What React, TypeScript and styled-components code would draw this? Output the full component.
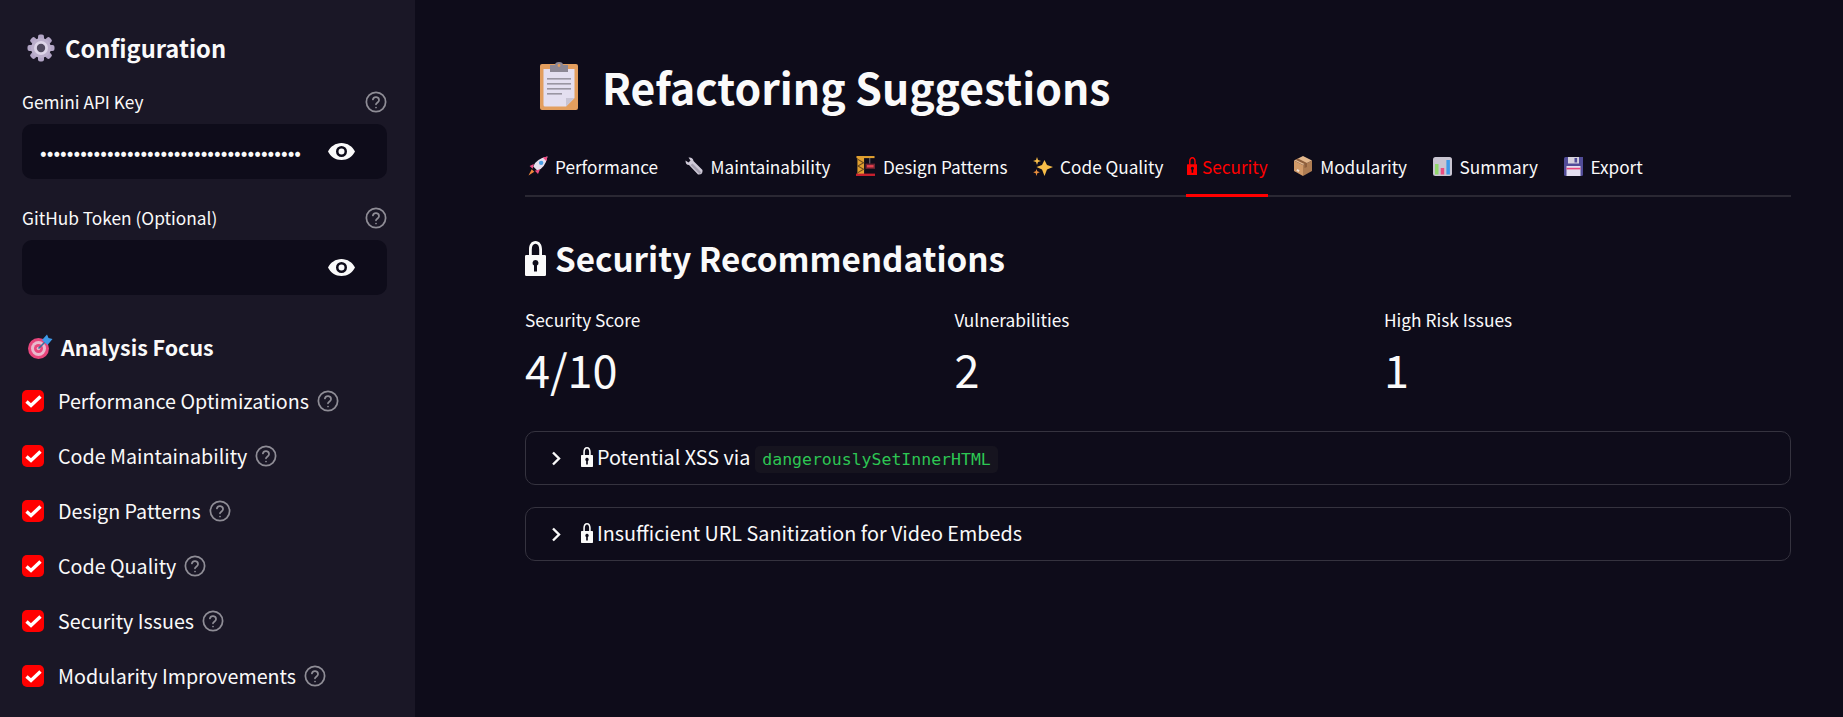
import React from "react";
import styled, { createGlobalStyle } from "styled-components";

const SANS = '"Noto Sans CJK JP", "Noto Sans", sans-serif';
const MONO = '"DejaVu Sans Mono", "Liberation Mono", monospace';

const Global = createGlobalStyle`
    html, body {
        margin: 0;
        height: 717px;
        overflow: hidden;
        background: #0e0c1a;
        font-family: ${SANS};
        color: #fafafa;
    }
    * { box-sizing: border-box; }
`;

const Gear = () => <svg width="28" height="28" viewBox="0 0 28 28">
    <g fill="#b3a6c6">
        {[0, 45, 90, 135, 180, 225, 270, 315].map(a =>
            <rect key={a} x="11" y="0.5" width="6" height="7" rx="2" transform={`rotate(${a} 14 14)`}/>)}
    </g>
    <circle cx="14" cy="14" r="10" fill="#bcb0cc"/>
    <circle cx="14" cy="14" r="7" fill="#ddd5e8"/>
    <circle cx="14" cy="14" r="4.2" fill="#504a5e"/>
</svg>;

const Target = () => <svg width="26" height="26" viewBox="0 0 26 26">
    <circle cx="11.5" cy="14.5" r="10.5" fill="#e8467c"/>
    <circle cx="11.5" cy="14.5" r="7.5" fill="#eab9cd"/>
    <circle cx="11.5" cy="14.5" r="4.5" fill="#e8467c"/>
    <circle cx="11.5" cy="14.5" r="1.8" fill="#eab9cd"/>
    <path d="M11.5 14.5 L20 6" stroke="#3a6f9e" strokeWidth="1.6"/>
    <path d="M15 6 L20 0.5 L21.5 4 L25.5 5 L20.5 11 Z" fill="#3d9ae8"/>
</svg>;

const Clipboard = () => <svg width="38" height="48" viewBox="0 0 38 48">
    <rect x="0" y="2" width="38" height="46" rx="2" fill="#e39e5e"/>
    <path d="M3.5 7 H34.5 V36 L26 44.5 H5 Q3.5 44.5 3.5 43 Z" fill="#e4dff0"/>
    <path d="M34.5 36 H26 V44.5 Z" fill="#c8c4d4"/>
    <path d="M10 3 H15 Q15 0 19 0 Q23 0 23 3 H28 V10 H10 Z" fill="#8c8794"/>
    <circle cx="19" cy="3.5" r="1.4" fill="#e39e5e"/>
    <g fill="#9a96a2">
        <rect x="7" y="16" width="24" height="1.6"/>
        <rect x="7" y="21" width="24" height="1.6"/>
        <rect x="7" y="26" width="24" height="1.6"/>
        <rect x="7" y="31" width="15" height="1.6"/>
    </g>
</svg>;

const Rocket = () => <svg width="20" height="20" viewBox="0 0 19 19">
    <path d="M5 10 Q7 3 18.5 0.5 Q16.5 11 9 14 Z" fill="#e6e0ee"/>
    <path d="M14 1.5 L18.5 0.5 L17.5 5 Z" fill="#ee4d84"/>
    <circle cx="12.5" cy="6.5" r="2.1" fill="#4aa0e6"/>
    <path d="M5.5 7.5 L1.5 9.5 L4.5 12 Z M11.5 12.5 L9.5 17 L6.5 14 Z" fill="#ee4d84"/>
    <path d="M3.5 12.5 L6 15 L0.5 18.5 Z" fill="#f0883a"/>
</svg>;

const Wrench = () => <svg width="18" height="18" viewBox="0 0 18 18">
    <path d="M0.5 3.5 L3.5 5.5 L5.5 3.5 L3.5 0.5 Q8 0 8.5 4 L17.5 13 Q18 18 13 17.5 L4 8 Q0.5 8 0.5 3.5 Z" fill="#cfcad8"/>
    <path d="M7.5 6.5 L16.5 15.5 L14.5 17 L5.5 8 Z" fill="#a5a0b0"/>
</svg>;

const Tower = () => <svg width="19" height="20" viewBox="0 0 20 21">
    <rect x="0.5" y="0" width="19" height="2.2" fill="#e0a030"/>
    <rect x="1.5" y="0" width="7" height="19" fill="#e0a030"/>
    <path d="M2 3.5 L8 7 L2 10.5 L8 14 L2 17.5" stroke="#6b4a1e" strokeWidth="1.1" fill="none"/>
    <rect x="14" y="2" width="1" height="6" fill="#7b7580"/>
    <rect x="10" y="8" width="10" height="5.5" fill="#6d2430"/>
    <rect x="11.5" y="9.5" width="7" height="2.5" fill="#e2404e"/>
    <rect x="0" y="18.5" width="20" height="2.5" fill="#c8202e"/>
</svg>;

const Sparkle = () => <svg width="20" height="19" viewBox="0 0 20 19">
    <path d="M11.5 3 L14 8 L20 10 L14 12.5 L11.5 19 L9 12.5 L3.5 10 L9 8 Z" fill="#f7bd48"/>
    <path d="M4 0 L5 3 L8 4 L5 5 L4 8 L3 5 L0 4 L3 3 Z" fill="#f7bd48"/>
    <path d="M3.5 12 L4.3 14.3 L6.8 15.3 L4.3 16.3 L3.5 19 L2.7 16.3 L0.2 15.3 L2.7 14.3 Z" fill="#ec8f3c"/>
</svg>;

const Cube = () => <svg width="20" height="20" viewBox="0 0 20 20">
    <path d="M10 9 L19 4.5 V15 L10 20 Z" fill="#ae7c52"/>
    <path d="M10 9 L1 4.5 V15 L10 20 Z" fill="#d19a68"/>
    <path d="M10 0 L19 4.5 L10 9 L1 4.5 Z" fill="#e3b78c"/>
    <path d="M5 2.5 L14 7 V11 L11.5 12 V8 L2.5 3.7 Z" fill="#8e5f3c"/>
    <rect x="4" y="13.5" width="2.5" height="2" fill="#efe3d8" transform="rotate(28 5 14)"/>
</svg>;

const Chart = () => <svg width="19" height="19" viewBox="0 0 19 19">
    <rect width="19" height="19" rx="2.5" fill="#c9c5d1"/>
    <rect x="2" y="7" width="3.5" height="10.5" fill="#92d86c"/>
    <rect x="7.7" y="11" width="3.5" height="6.5" fill="#ea4d80"/>
    <rect x="13.4" y="3" width="3.5" height="14.5" fill="#3d9ae8"/>
</svg>;

const Floppy = () => <svg width="19" height="19" viewBox="0 0 19 19">
    <path d="M0 1.5 Q0 0 1.5 0 H19 V17.5 Q19 19 17.5 19 H1.5 Q0 19 0 17.5 Z" fill="#514c98"/>
    <rect x="4" y="0" width="11" height="6.5" fill="#d6d2de"/>
    <rect x="10.5" y="1" width="2.6" height="4.5" fill="#514c98"/>
    <rect x="2.5" y="9" width="14" height="10" fill="#e4dff0"/>
    <rect x="2.5" y="10.8" width="14" height="1.6" fill="#e8467c"/>
</svg>;

const Lock = ({h}: {h: number}) => <svg width={h * 0.6} height={h} viewBox="0 0 21 35" fill="currentColor">
    <path d="M4 15 V8.5 C4 3.5 6.5 0 10.5 0 C14.5 0 17 3.5 17 8.5 V15 H14.2 V8.5 C14.2 5 12.8 2.8 10.5 2.8 C8.2 2.8 6.8 5 6.8 8.5 V15 Z"/>
    <path fillRule="evenodd" d="M1.2 14 H19.8 Q21 14 21 15.2 V33.8 Q21 35 19.8 35 H1.2 Q0 35 0 33.8 V15.2 Q0 14 1.2 14 Z M10.5 19 A3 3 0 0 0 9 24.6 V30.5 H12 V24.6 A3 3 0 0 0 10.5 19 Z"/>
</svg>;

const HelpIcon = () => <svg width="22" height="22" viewBox="0 0 24 24" fill="none" stroke="#8f8d96" strokeWidth="1.9" strokeLinecap="round">
    <circle cx="12" cy="12" r="10.5"/>
    <path d="M8.6 9.2a3.4 3.4 0 0 1 6.7 1c0 2.2-3.3 2.8-3.3 4.3"/>
    <path d="M12 18h.01"/>
</svg>;

const EyeIcon = () => <svg width="27" height="17" viewBox="0 0 27 17">
    <path fillRule="evenodd" fill="#fafafa" d="M13.5 0 C19.5 0 24.5 3.5 27 8.5 C24.5 13.5 19.5 17 13.5 17 C7.5 17 2.5 13.5 0 8.5 C2.5 3.5 7.5 0 13.5 0 Z M13.5 3 A5.5 5.5 0 1 0 13.5 14 A5.5 5.5 0 1 0 13.5 3 Z M13.5 5.5 A3 3 0 1 1 13.5 11.5 A3 3 0 1 1 13.5 5.5 Z"/>
</svg>;

const Check = () => <svg width="17" height="13" viewBox="0 0 17 13" fill="none" stroke="#fff" strokeWidth="3.4">
    <path d="M1.5 6.5 L6 10.5 L15.5 1.5"/>
</svg>;

const Chevron = () => <svg width="10" height="15" viewBox="0 0 10 15" fill="none" stroke="#fafafa" strokeWidth="2.4">
    <path d="M2 1.5 L8 7.5 L2 13.5"/>
</svg>;

const focusItems = [
    "Performance Optimizations",
    "Code Maintainability",
    "Design Patterns",
    "Code Quality",
    "Security Issues",
    "Modularity Improvements",
];

const tabs = [
    {label: "Performance", icon: <Rocket/>},
    {label: "Maintainability", icon: <Wrench/>},
    {label: "Design Patterns", icon: <Tower/>},
    {label: "Code Quality", icon: <Sparkle/>},
    {label: "Security", icon: <Lock h={18}/>, active: true},
    {label: "Modularity", icon: <Cube/>},
    {label: "Summary", icon: <Chart/>},
    {label: "Export", icon: <Floppy/>},
];

const metrics = [
    {label: "Security Score", value: "4/10"},
    {label: "Vulnerabilities", value: "2"},
    {label: "High Risk Issues", value: "1"},
];

function App() {
    return <Page>
        <Global/>
        <Sidebar>
            <SideHeading><Gear/>Configuration</SideHeading>
            <Field>
                <FieldLabel>Gemini API Key<HelpIcon/></FieldLabel>
                <InputBox>
                    <PasswordInput type="password" readOnly value={"x".repeat(39)}/>
                    <EyeIcon/>
                </InputBox>
            </Field>
            <Field>
                <FieldLabel>GitHub Token (Optional)<HelpIcon/></FieldLabel>
                <InputBox>
                    <PasswordInput type="password" readOnly value=""/>
                    <EyeIcon/>
                </InputBox>
            </Field>
            <FocusHeading><Target/>Analysis Focus</FocusHeading>
            <CheckList>
                {focusItems.map(item => <CheckRow key={item}>
                    <CheckBox><Check/></CheckBox>
                    <span>{item}</span>
                    <HelpIcon/>
                </CheckRow>)}
            </CheckList>
        </Sidebar>
        <Main>
            <Title><Clipboard/>Refactoring Suggestions</Title>
            <TabBar>
                {tabs.map(tab => <Tab key={tab.label} $active={tab.active}>
                    <TabIcon $narrow={tab.active}>{tab.icon}</TabIcon>
                    {tab.label}
                </Tab>)}
            </TabBar>
            <SectionHeading><Lock h={35}/>Security Recommendations</SectionHeading>
            <MetricGrid>
                {metrics.map(m => <div key={m.label}>
                    <MetricLabel>{m.label}</MetricLabel>
                    <MetricValue>{m.value}</MetricValue>
                </div>)}
            </MetricGrid>
            <Expander>
                <Chevron/>
                <ExpanderTitle><Lock h={20}/>Potential XSS via <Code>dangerouslySetInnerHTML</Code></ExpanderTitle>
            </Expander>
            <Expander>
                <Chevron/>
                <ExpanderTitle><Lock h={20}/>Insufficient URL Sanitization for Video Embeds</ExpanderTitle>
            </Expander>
        </Main>
    </Page>;
}

const Page = styled.div`
    display: flex;
    height: 717px;
    overflow: hidden;
`;

const Sidebar = styled.aside`
    width: 415px;
    flex-shrink: 0;
    background: #1a1726;
    padding: 30px 28px 0 22px;
`;

const SideHeading = styled.h3`
    display: flex;
    align-items: center;
    gap: 10px;
    margin: 0 0 0 5px;
    height: 36px;
    font-size: 23.7px;
    font-weight: 600;
    line-height: 36px;
`;

const Field = styled.div`
    margin-top: 24px;

    & + & {
        margin-top: 27px;
    }
`;

const FieldLabel = styled.label`
    display: flex;
    align-items: center;
    justify-content: space-between;
    height: 24px;
    margin-bottom: 10px;
    font-size: 17.3px;
    line-height: 24px;
`;

const InputBox = styled.div`
    display: flex;
    align-items: center;
    height: 55px;
    padding: 0 32px 0 18px;
    border-radius: 10px;
    background: #0e0c1a;
`;

const PasswordInput = styled.input`
    flex: 1;
    min-width: 0;
    border: 0;
    outline: 0;
    padding: 0;
    background: transparent;
    color: #fafafa;
    font-family: ${SANS};
    font-size: 19.7px;
`;

const FocusHeading = styled.h3`
    display: flex;
    align-items: center;
    gap: 8px;
    margin: 36px 0 0 5px;
    height: 32px;
    font-size: 21.4px;
    font-weight: 600;
    line-height: 32px;
`;

const CheckList = styled.div`
    display: flex;
    flex-direction: column;
    gap: 27px;
    margin-top: 24px;
`;

const CheckRow = styled.div`
    display: flex;
    align-items: center;
    height: 28px;
    font-size: 19.7px;
    line-height: 28px;

    span {
        margin: 0 8px 0 14px;
    }
`;

const CheckBox = styled.div`
    display: flex;
    align-items: center;
    justify-content: center;
    width: 22px;
    height: 22px;
    border-radius: 5px;
    background: #ff0000;
`;

const Main = styled.main`
    flex: 1;
    min-width: 0;
    padding: 54px 52px 0 110px;
`;

const Title = styled.h1`
    display: flex;
    align-items: center;
    gap: 24px;
    height: 64px;
    margin: 0;
    padding-left: 15px;
    font-size: 42.7px;
    font-weight: 600;
    line-height: 64px;
`;

const TabBar = styled.div`
    display: flex;
    gap: 22.5px;
    height: 46px;
    margin-top: 33px;
    border-bottom: 2px solid #2a2833;
`;

const Tab = styled.div<{ $active?: boolean }>`
    display: flex;
    align-items: center;
    gap: 4px;
    height: 46px;
    padding-bottom: 13px;
    font-size: 17.2px;
    color: ${p => (p.$active ? "#ff0000" : "#fafafa")};
    border-bottom: 3px solid ${p => (p.$active ? "#ff0000" : "transparent")};
`;

const TabIcon = styled.span<{ $narrow?: boolean }>`
    display: flex;
    align-items: center;
    justify-content: center;
    width: ${p => (p.$narrow ? "12px" : "26px")};
`;

const SectionHeading = styled.h2`
    display: flex;
    align-items: center;
    gap: 9px;
    height: 48px;
    margin: 37px 0 0;
    font-size: 33.2px;
    font-weight: 600;
    line-height: 48px;
`;

const MetricGrid = styled.div`
    display: grid;
    grid-template-columns: repeat(3, 1fr);
    gap: 22.5px;
    margin: 26px 0 32px;
`;

const MetricLabel = styled.div`
    height: 24px;
    font-size: 17.3px;
    line-height: 24px;
`;

const MetricValue = styled.div`
    height: 60px;
    margin-top: 7px;
    font-size: 45px;
    font-weight: 400;
    line-height: 60px;
`;

const Expander = styled.div`
    display: flex;
    align-items: center;
    gap: 20px;
    height: 54px;
    margin-top: 22px;
    padding-left: 25px;
    border: 1px solid #35333f;
    border-radius: 10px;
`;

const ExpanderTitle = styled.div`
    display: flex;
    align-items: center;
    gap: 4px;
    padding-bottom: 2px;
    font-size: 19.75px;
    line-height: 28px;
`;

const Code = styled.code`
    display: inline-block;
    height: 27px;
    margin: 4px 0 0 1px;
    padding: 0 7px;
    border-radius: 5px;
    background: #16141f;
    color: #2dc653;
    font-family: ${MONO};
    font-size: 16.5px;
    line-height: 27px;
`;

export default App;
